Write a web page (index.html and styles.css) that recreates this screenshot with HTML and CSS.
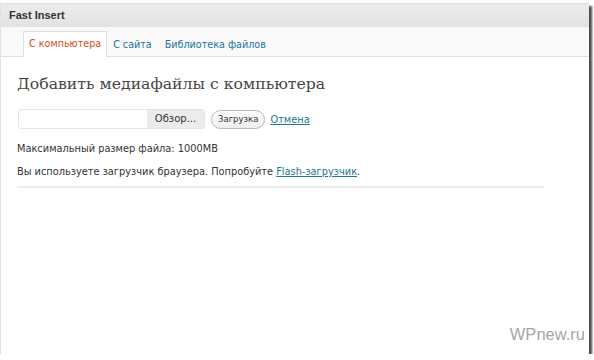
FILE: index.html
```html
<!DOCTYPE html>
<html lang="ru">
<head>
    <meta charset="UTF-8">
    <title>Fast Insert</title>
    <link rel="stylesheet" href="styles.css">
</head>
<body>
    <div class="shot">
        <div class="title-bar">Fast Insert</div>
        <div class="tabs">
            <a href="#" class="tab active">С компьютера</a>
            <a href="#" class="tab">С сайта</a>
            <a href="#" class="tab">Библиотека файлов</a>
        </div>
        <div class="content">
            <h1>Добавить медиафайлы с компьютера</h1>
            <div class="upload-row">
                <div class="file-field">
                    <span class="file-name"></span>
                    <span class="browse">Обзор...</span>
                </div>
                <button class="upload-btn">Загрузка</button>
                <a href="#" class="cancel">Отмена</a>
            </div>
            <p class="note">Максимальный размер файла: 1000MB</p>
            <p class="note">Вы используете загрузчик браузера. Попробуйте <a href="#">Flash-загрузчик</a>.</p>
            <hr>
        </div>
        <div class="watermark">WPnew.ru</div>
    </div>
</body>
</html>
```

FILE: styles.css
```css
body {
    margin: 0;
    background-color: #ffffff;
    font-family: "DejaVu Sans", sans-serif;
}
.shot {
    position: relative;
    width: 589px;
    height: 351px;
    margin-top: 3px;
    background-color: #ffffff;
    border-left: 1px solid #e2e2e2;
    box-shadow: 3px 3px 2px #4a4a4a;
    box-sizing: border-box;
}
.title-bar {
    height: 23px;
    line-height: 23px;
    padding-left: 8px;
    background: linear-gradient(#ececec, #e2e2e2);
    border-top: 1px solid #dcdcdc;
    font-family: "Liberation Sans", sans-serif;
    font-size: 11px;
    font-weight: bold;
    color: #333333;
}
.tabs {
    display: flex;
    align-items: flex-end;
    height: 29px;
    padding-left: 22px;
    background-color: #f9f9f9;
    border-bottom: 1px solid #dfdfdf;
}
.tab {
    padding: 0 5px 0 6px;
    height: 24px;
    line-height: 24px;
    font-size: 9.6px;
    color: #21759b;
    text-decoration: none;
    border: 1px solid transparent;
    border-bottom: none;
    margin-bottom: -1px;
}
.tab.active {
    padding: 0 5px;
    color: #d54e21;
    background-color: #ffffff;
    border-color: #dfdfdf;
    height: 25px;
    margin-right: -1px;
}
.content {
    padding: 0 45px 0 16px;
}
h1 {
    margin: 15px 0 0;
    font-family: "DejaVu Serif", serif;
    font-weight: normal;
    font-size: 15.7px;
    color: #464646;
    height: 24px;
    line-height: 24px;
}
.upload-row {
    display: flex;
    align-items: center;
    margin-top: 12px;
    height: 22px;
}
.file-field {
    display: flex;
    width: 187px;
    height: 20px;
    margin-left: 1px;
    border-radius: 3px;
    overflow: hidden;
    background-color: #ffffff;
    border: 1px solid #e4e4e4;
    box-sizing: border-box;
}
.file-name {
    flex: 1;
}
.browse {
    width: 57px;
    line-height: 18px;
    text-align: center;
    background-color: #ececec;
    font-size: 10px;
    color: #333333;
}
.upload-btn {
    margin-left: 6px;
    height: 19px;
    padding: 0 6px;
    border: 1px solid #bbbbbb;
    border-radius: 10px;
    background: linear-gradient(#ffffff, #eeeeee);
    font-family: "DejaVu Sans", sans-serif;
    font-size: 8.5px;
    color: #333333;
}
.cancel {
    margin-left: 5px;
    font-size: 9.8px;
    color: #21759b;
}
.note {
    margin: 12px 0 0;
    font-size: 9.8px;
    color: #333333;
    line-height: 14px;
}
.note + .note {
    margin-top: 9px;
}
.note a {
    color: #21759b;
}
hr {
    margin: 7px 0 0;
    border: none;
    border-top: 2px solid #ececec;
}
.watermark {
    position: absolute;
    right: 4px;
    bottom: 10px;
    font-family: "Liberation Sans", sans-serif;
    font-size: 16.5px;
    color: #a6a6a6;
}
```
